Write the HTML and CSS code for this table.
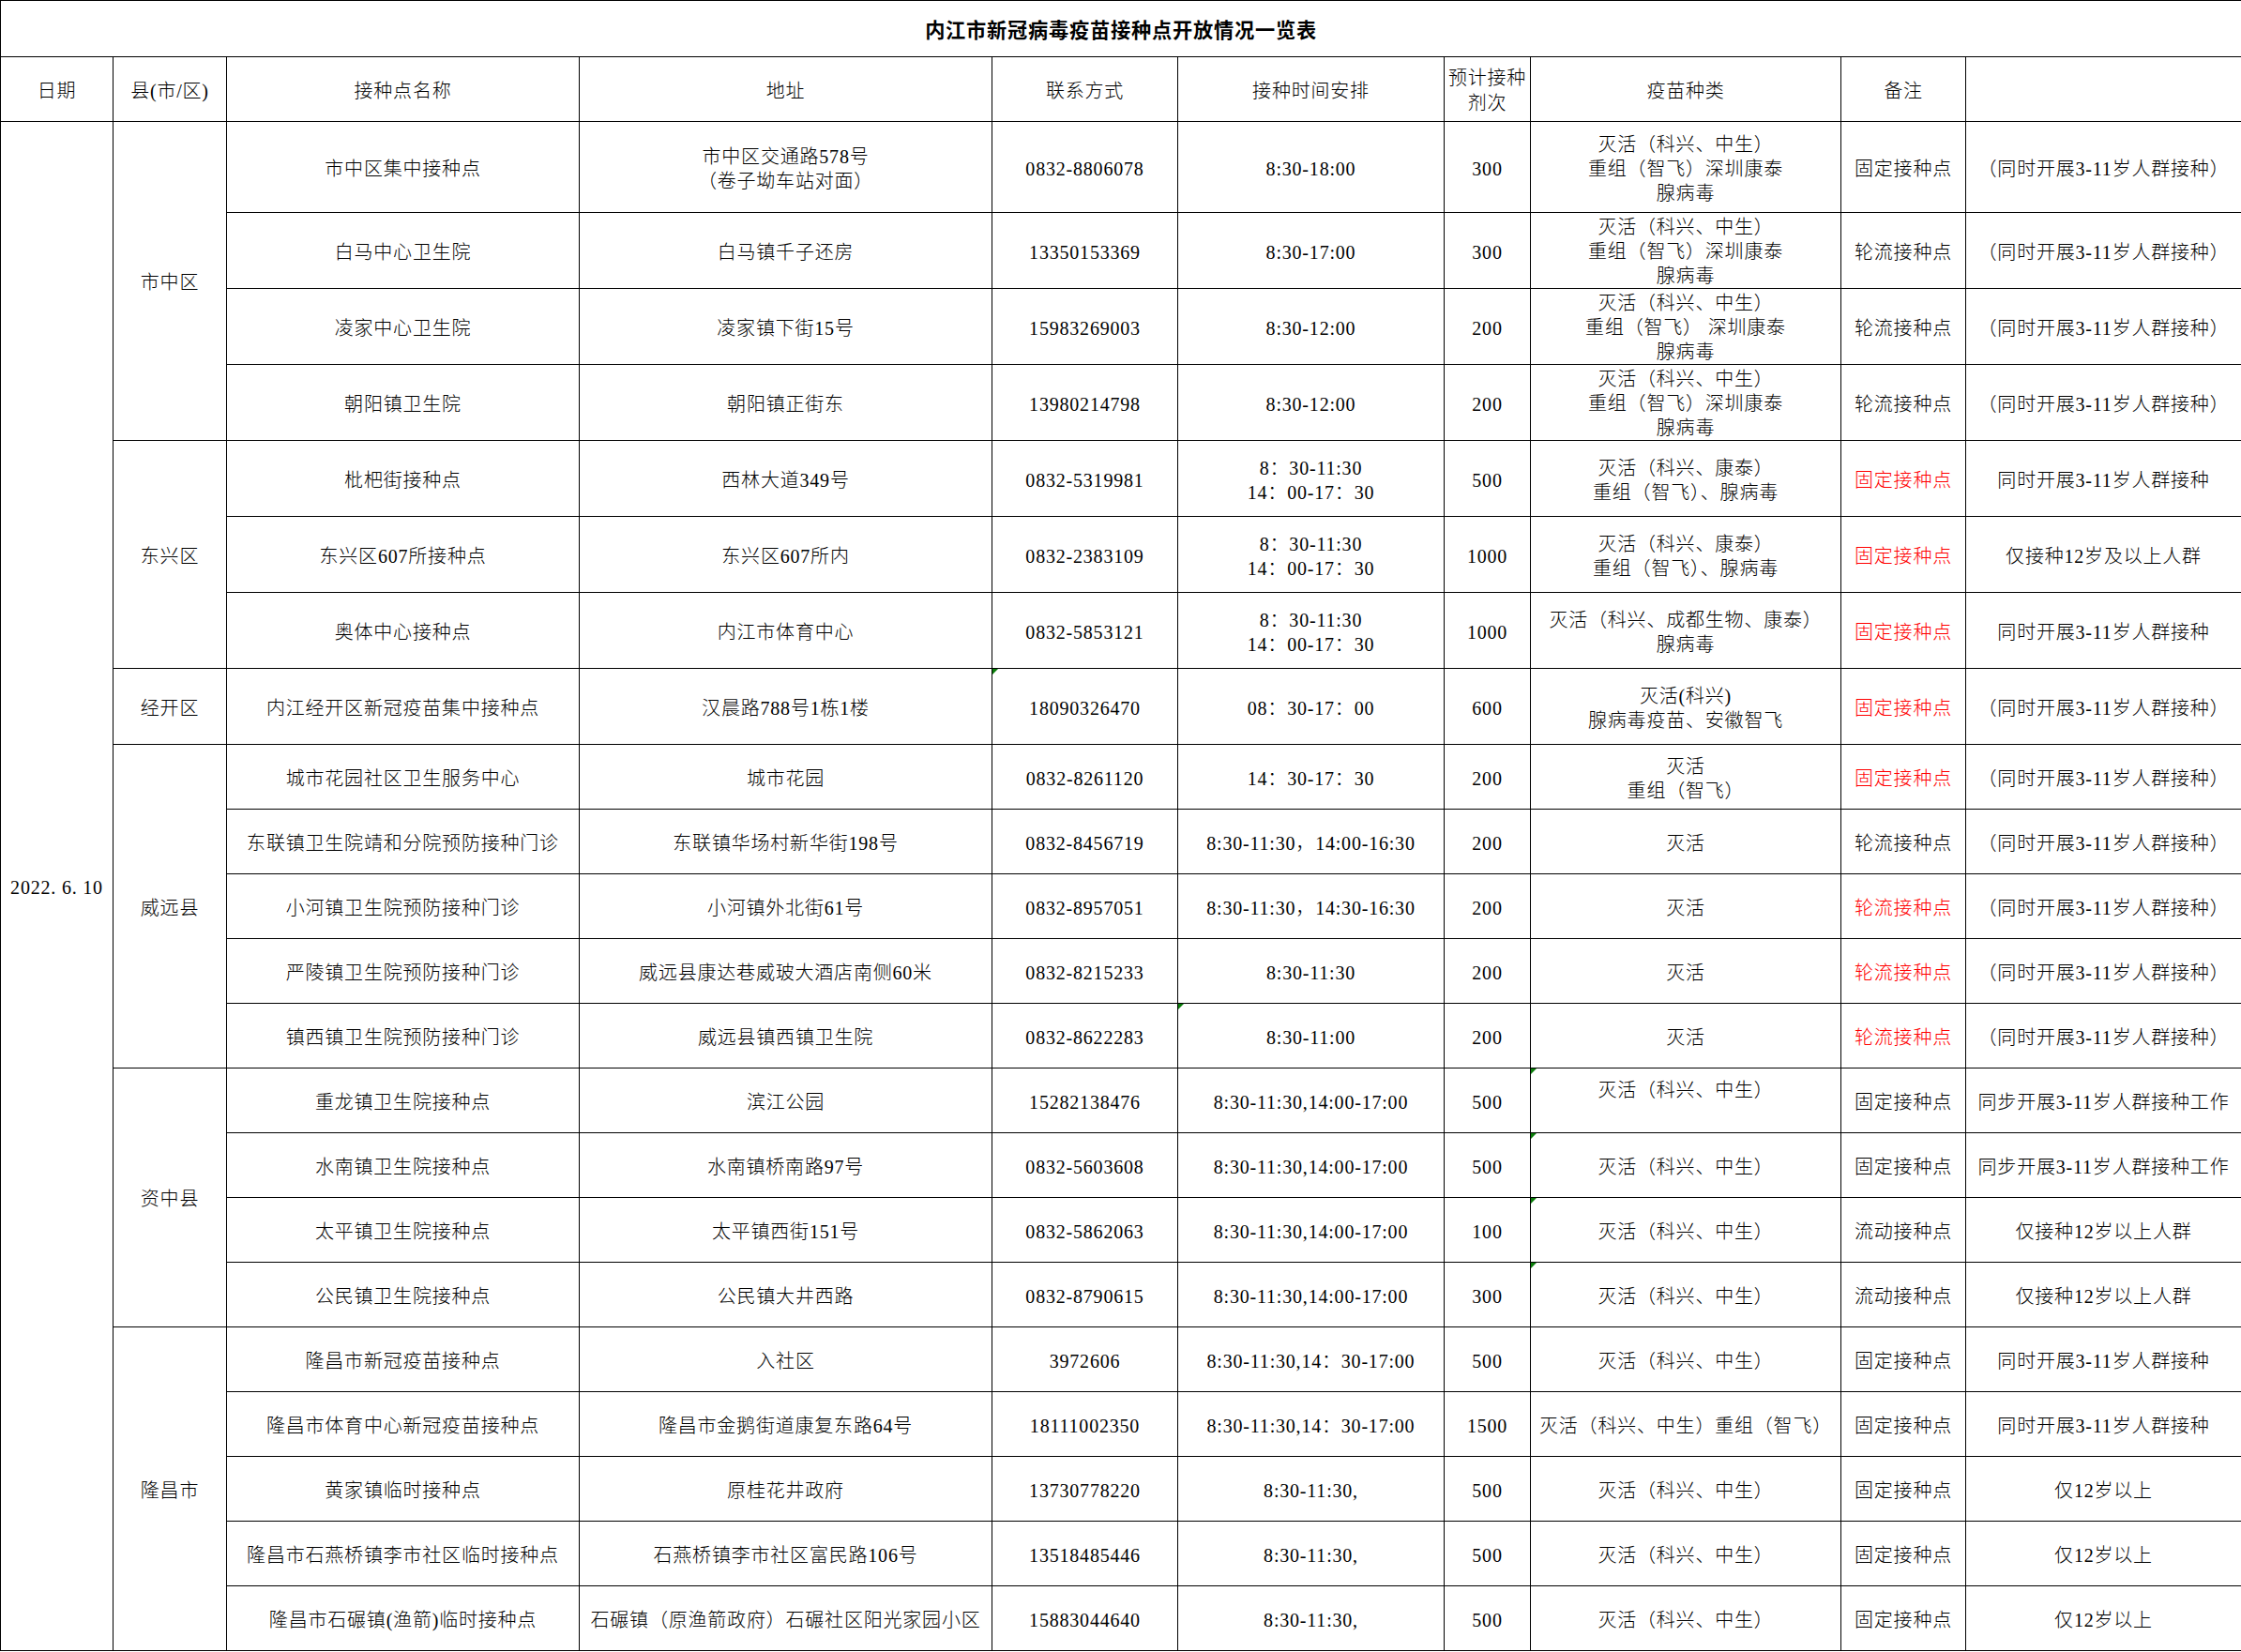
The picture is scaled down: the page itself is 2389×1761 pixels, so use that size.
FILE: index.html
```html
<!DOCTYPE html>
<html lang="zh-CN">
<head>
<meta charset="utf-8">
<title>内江市新冠病毒疫苗接种点开放情况一览表</title>
<link rel="stylesheet" href="styles.css">
</head>
<body>
<table class="sheet">
  <colgroup>
    <col class="c-date"><col class="c-county"><col class="c-name"><col class="c-addr"><col class="c-tel"><col class="c-time"><col class="c-num"><col class="c-vac"><col class="c-note"><col class="c-extra">
  </colgroup>
  <tbody>
    <tr class="r-title"><td colspan="10" class="title">内江市新冠病毒疫苗接种点开放情况一览表</td></tr>
    <tr class="r-head">
      <td>日期</td><td>县(市/区)</td><td>接种点名称</td><td>地址</td><td>联系方式</td><td>接种时间安排</td><td class="tight">预计接种<br>剂次</td><td>疫苗种类</td><td>备注</td><td></td>
    </tr>
    <tr class="r-first">
      <td rowspan="22" class="date">2022. 6. 10</td>
      <td rowspan="4">市中区</td>
      <td>市中区集中接种点</td><td>市中区交通路578号<br>（卷子坳车站对面）</td><td>0832-8806078</td><td>8:30-18:00</td><td>300</td>
      <td>灭活（科兴、中生）<br>重组（智飞）深圳康泰<br>腺病毒</td><td>固定接种点</td><td>（同时开展3-11岁人群接种）</td>
    </tr>
    <tr class="r-mid">
      <td>白马中心卫生院</td><td>白马镇千子还房</td><td>13350153369</td><td>8:30-17:00</td><td>300</td>
      <td class="three">灭活（科兴、中生）<br>重组（智飞）深圳康泰<br>腺病毒</td><td>轮流接种点</td><td>（同时开展3-11岁人群接种）</td>
    </tr>
    <tr class="r-mid">
      <td>凌家中心卫生院</td><td>凌家镇下街15号</td><td>15983269003</td><td>8:30-12:00</td><td>200</td>
      <td class="three">灭活（科兴、中生）<br>重组（智飞） 深圳康泰<br>腺病毒</td><td>轮流接种点</td><td>（同时开展3-11岁人群接种）</td>
    </tr>
    <tr class="r-mid">
      <td>朝阳镇卫生院</td><td>朝阳镇正街东</td><td>13980214798</td><td>8:30-12:00</td><td>200</td>
      <td class="three">灭活（科兴、中生）<br>重组（智飞）深圳康泰<br>腺病毒</td><td>轮流接种点</td><td>（同时开展3-11岁人群接种）</td>
    </tr>
    <tr class="r-mid">
      <td rowspan="3">东兴区</td>
      <td>枇杷街接种点</td><td>西林大道349号</td><td>0832-5319981</td><td>8：30-11:30<br>14：00-17：30</td><td>500</td>
      <td>灭活（科兴、康泰）<br>重组（智飞）、腺病毒</td><td class="red">固定接种点</td><td>同时开展3-11岁人群接种</td>
    </tr>
    <tr class="r-mid">
      <td>东兴区607所接种点</td><td>东兴区607所内</td><td>0832-2383109</td><td>8：30-11:30<br>14：00-17：30</td><td>1000</td>
      <td>灭活（科兴、康泰）<br>重组（智飞）、腺病毒</td><td class="red">固定接种点</td><td>仅接种12岁及以上人群</td>
    </tr>
    <tr class="r-mid">
      <td>奥体中心接种点</td><td>内江市体育中心</td><td>0832-5853121</td><td>8：30-11:30<br>14：00-17：30</td><td>1000</td>
      <td>灭活（科兴、成都生物、康泰）<br>腺病毒</td><td class="red">固定接种点</td><td>同时开展3-11岁人群接种</td>
    </tr>
    <tr class="r-mid">
      <td>经开区</td>
      <td>内江经开区新冠疫苗集中接种点</td><td>汉晨路788号1栋1楼</td><td class="flag">18090326470</td><td>08：30-17：00</td><td>600</td>
      <td>灭活(科兴)<br>腺病毒疫苗、安徽智飞</td><td class="red">固定接种点</td><td>（同时开展3-11岁人群接种）</td>
    </tr>
    <tr class="r-low">
      <td rowspan="5">威远县</td>
      <td>城市花园社区卫生服务中心</td><td>城市花园</td><td>0832-8261120</td><td>14：30-17：30</td><td>200</td>
      <td>灭活<br>重组（智飞）</td><td class="red">固定接种点</td><td>（同时开展3-11岁人群接种）</td>
    </tr>
    <tr class="r-low">
      <td>东联镇卫生院靖和分院预防接种门诊</td><td>东联镇华场村新华街198号</td><td>0832-8456719</td><td>8:30-11:30，14:00-16:30</td><td>200</td>
      <td>灭活</td><td>轮流接种点</td><td>（同时开展3-11岁人群接种）</td>
    </tr>
    <tr class="r-low">
      <td>小河镇卫生院预防接种门诊</td><td>小河镇外北街61号</td><td>0832-8957051</td><td>8:30-11:30，14:30-16:30</td><td>200</td>
      <td>灭活</td><td class="red">轮流接种点</td><td>（同时开展3-11岁人群接种）</td>
    </tr>
    <tr class="r-low">
      <td>严陵镇卫生院预防接种门诊</td><td>威远县康达巷威玻大酒店南侧60米</td><td>0832-8215233</td><td>8:30-11:30</td><td>200</td>
      <td>灭活</td><td class="red">轮流接种点</td><td>（同时开展3-11岁人群接种）</td>
    </tr>
    <tr class="r-low">
      <td>镇西镇卫生院预防接种门诊</td><td>威远县镇西镇卫生院</td><td>0832-8622283</td><td class="flag">8:30-11:00</td><td>200</td>
      <td>灭活</td><td class="red">轮流接种点</td><td>（同时开展3-11岁人群接种）</td>
    </tr>
    <tr class="r-low">
      <td rowspan="4">资中县</td>
      <td>重龙镇卫生院接种点</td><td>滨江公园</td><td>15282138476</td><td>8:30-11:30,14:00-17:00</td><td>500</td>
      <td class="flag raised">灭活（科兴、中生）</td><td>固定接种点</td><td>同步开展3-11岁人群接种工作</td>
    </tr>
    <tr class="r-low">
      <td>水南镇卫生院接种点</td><td>水南镇桥南路97号</td><td>0832-5603608</td><td>8:30-11:30,14:00-17:00</td><td>500</td>
      <td class="flag">灭活（科兴、中生）</td><td>固定接种点</td><td>同步开展3-11岁人群接种工作</td>
    </tr>
    <tr class="r-low">
      <td>太平镇卫生院接种点</td><td>太平镇西街151号</td><td>0832-5862063</td><td>8:30-11:30,14:00-17:00</td><td>100</td>
      <td class="flag">灭活（科兴、中生）</td><td>流动接种点</td><td>仅接种12岁以上人群</td>
    </tr>
    <tr class="r-low">
      <td>公民镇卫生院接种点</td><td>公民镇大井西路</td><td>0832-8790615</td><td>8:30-11:30,14:00-17:00</td><td>300</td>
      <td class="flag">灭活（科兴、中生）</td><td>流动接种点</td><td>仅接种12岁以上人群</td>
    </tr>
    <tr class="r-low">
      <td rowspan="5">隆昌市</td>
      <td>隆昌市新冠疫苗接种点</td><td>入社区</td><td>3972606</td><td>8:30-11:30,14：30-17:00</td><td>500</td>
      <td>灭活（科兴、中生）</td><td>固定接种点</td><td>同时开展3-11岁人群接种</td>
    </tr>
    <tr class="r-low">
      <td>隆昌市体育中心新冠疫苗接种点</td><td>隆昌市金鹅街道康复东路64号</td><td>18111002350</td><td>8:30-11:30,14：30-17:00</td><td>1500</td>
      <td>灭活（科兴、中生）重组（智飞）</td><td>固定接种点</td><td>同时开展3-11岁人群接种</td>
    </tr>
    <tr class="r-low">
      <td>黄家镇临时接种点</td><td>原桂花井政府</td><td>13730778220</td><td>8:30-11:30,</td><td>500</td>
      <td>灭活（科兴、中生）</td><td>固定接种点</td><td>仅12岁以上</td>
    </tr>
    <tr class="r-low">
      <td>隆昌市石燕桥镇李市社区临时接种点</td><td>石燕桥镇李市社区富民路106号</td><td>13518485446</td><td>8:30-11:30,</td><td>500</td>
      <td>灭活（科兴、中生）</td><td>固定接种点</td><td>仅12岁以上</td>
    </tr>
    <tr class="r-low">
      <td>隆昌市石碾镇(渔箭)临时接种点</td><td>石碾镇（原渔箭政府）石碾社区阳光家园小区</td><td>15883044640</td><td>8:30-11:30,</td><td>500</td>
      <td>灭活（科兴、中生）</td><td>固定接种点</td><td>仅12岁以上</td>
    </tr>
  </tbody>
</table>
</body>
</html>
```

FILE: styles.css
```css
html, body {
  margin: 0;
  padding: 0;
  background: #fff;
}

body {
  font-family: "Liberation Serif", "Noto Sans CJK SC", serif;
  font-size: 20px;
  letter-spacing: 0.8px;
  font-weight: 300;
  color: #000;
}

.sheet {
  border-collapse: collapse;
  table-layout: fixed;
  width: 2389px;
}

.c-date { width: 120px; }
.c-county { width: 121px; }
.c-name { width: 376px; }
.c-addr { width: 440px; }
.c-tel { width: 198px; }
.c-time { width: 284px; }
.c-num { width: 92px; }
.c-vac { width: 331px; }
.c-note { width: 133px; }
.c-extra { width: 294px; }

.sheet td {
  border: 1px solid #000;
  text-align: center;
  vertical-align: middle;
  padding: 3px 0 0;
  line-height: 26px;
  white-space: nowrap;
  overflow: visible;
  position: relative;
}

.r-title { height: 60px; }
.r-head { height: 69px; }
.r-first { height: 97px; }
.r-mid { height: 81px; }
.r-low { height: 69px; }

.sheet td.title {
  font-size: 21.2px;
  font-weight: 700;
  padding-top: 4px;
}

.sheet td.three {
  padding-top: 1px;
}

.sheet td.tight {
  line-height: 27px;
}

.sheet td.raised {
  padding-bottom: 26px;
}

.red {
  color: #ff0000;
}

.flag::before {
  content: "";
  position: absolute;
  left: 0;
  top: 0;
  border-top: 6px solid #0a7d0a;
  border-right: 6px solid transparent;
}
```
